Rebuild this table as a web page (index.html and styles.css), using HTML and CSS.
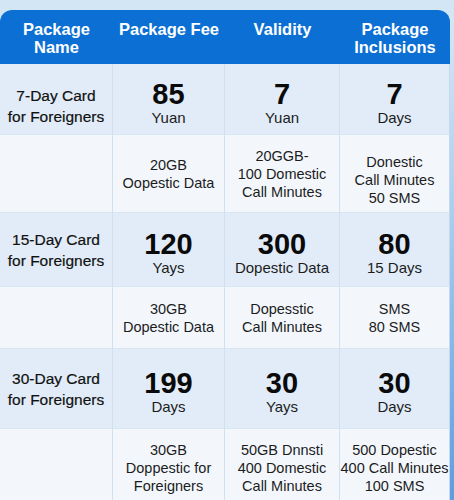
FILE: index.html
```html
<!DOCTYPE html>
<html lang="en">
<head>
<meta charset="utf-8">
<title>Foreigner SIM Card Packages</title>
<link rel="stylesheet" href="styles.css">
</head>
<body>
<div class="page">
  <div class="table">
    <div class="cell head">Package<br>Name</div>
    <div class="cell head">Package Fee</div>
    <div class="cell head">Validity</div>
    <div class="cell head">Package<br>Inclusions</div>

    <div class="cell main name name-first">7-Day Card<br>for Foreigners</div>
    <div class="cell main"><span class="num">85</span><span class="unit">Yuan</span></div>
    <div class="cell main"><span class="num">7</span><span class="unit">Yuan</span></div>
    <div class="cell main"><span class="num">7</span><span class="unit">Days</span></div>

    <div class="cell sub"></div>
    <div class="cell sub">20GB<br>Oopestic Data</div>
    <div class="cell sub">20GGB-<br>100 Domestic<br>Call Minutes</div>
    <div class="cell sub low">Donestic<br>Call Minutes<br>50 SMS</div>

    <div class="cell main name">15-Day Card<br>for Foreigners</div>
    <div class="cell main"><span class="num">120</span><span class="unit">Yays</span></div>
    <div class="cell main"><span class="num">300</span><span class="unit">Dopestic Data</span></div>
    <div class="cell main"><span class="num">80</span><span class="unit">15 Days</span></div>

    <div class="cell sub"></div>
    <div class="cell sub">30GB<br>Dopestic Data</div>
    <div class="cell sub">Dopesstic<br>Call Minutes</div>
    <div class="cell sub">SMS<br>80 SMS</div>

    <div class="cell main name">30-Day Card<br>for Foreigners</div>
    <div class="cell main"><span class="num">199</span><span class="unit">Days</span></div>
    <div class="cell main"><span class="num">30</span><span class="unit">Yays</span></div>
    <div class="cell main"><span class="num">30</span><span class="unit">Days</span></div>

    <div class="cell sub"></div>
    <div class="cell sub">30GB<br>Doppestic for<br>Foreigners</div>
    <div class="cell sub">50GB Dnnsti<br>400 Domestic<br>Call Minutes</div>
    <div class="cell sub">500 Dopestic<br>400 Call Minutes<br>100 SMS</div>
  </div>
  <div class="edge"></div>
</div>
</body>
</html>
```

FILE: styles.css
```css
html, body {
  margin: 0;
  padding: 0;
}
body {
  width: 454px;
  height: 500px;
  overflow: hidden;
  background: linear-gradient(180deg, #d3e6f6 0%, #dcebf8 100%);
  font-family: "Liberation Sans", Arial, sans-serif;
  color: #151515;
}
.page {
  display: flex;
  padding-top: 10px;
}
.table {
  width: 450px;
  flex: none;
  display: grid;
  grid-template-columns: 113px 112px 115px 110px;
  grid-template-rows: 54px 71px 78px 74px 62px 80px 78px;
  border-radius: 12px 12px 0 0;
  overflow: hidden;
  background: #f3f7fc;
}
.edge {
  flex: 1;
  background: linear-gradient(180deg, #d3e6f6 0%, #a9cdee 40%, #5c9be0 100%);
  margin-top: 14px;
}
.cell {
  display: flex;
  flex-direction: column;
  align-items: center;
  justify-content: center;
  text-align: center;
  border-right: 1px solid #cfe0f1;
  border-bottom: 1px solid #d8e6f4;
  box-sizing: border-box;
}
.cell:nth-child(4n) {
  border-right: 1px solid #c5d8ec;
}
.head {
  background: #0b6fd4;
  color: #ffffff;
  font-weight: bold;
  font-size: 16.5px;
  line-height: 18px;
  justify-content: flex-start;
  padding-top: 10px;
  border-right: none;
  border-bottom: none;
}
.head:nth-child(4n) {
  border-right: none;
}
.main {
  background: #e1ecf8;
  padding-top: 6px;
}
.sub {
  background: #f3f7fc;
  font-size: 14.5px;
  line-height: 18px;
  color: #1c1c1c;
}
.low {
  padding-top: 12px;
}
.name {
  font-size: 15.5px;
  line-height: 21px;
  color: #111;
  -webkit-text-stroke: 0.2px #111;
  padding-top: 0;
}
.name-first {
  padding-top: 14px;
}
.num {
  font-size: 29px;
  font-weight: bold;
  line-height: 30px;
  color: #0a0a0a;
}
.unit {
  font-size: 15px;
  line-height: 17px;
  color: #1c1c1c;
}
```
